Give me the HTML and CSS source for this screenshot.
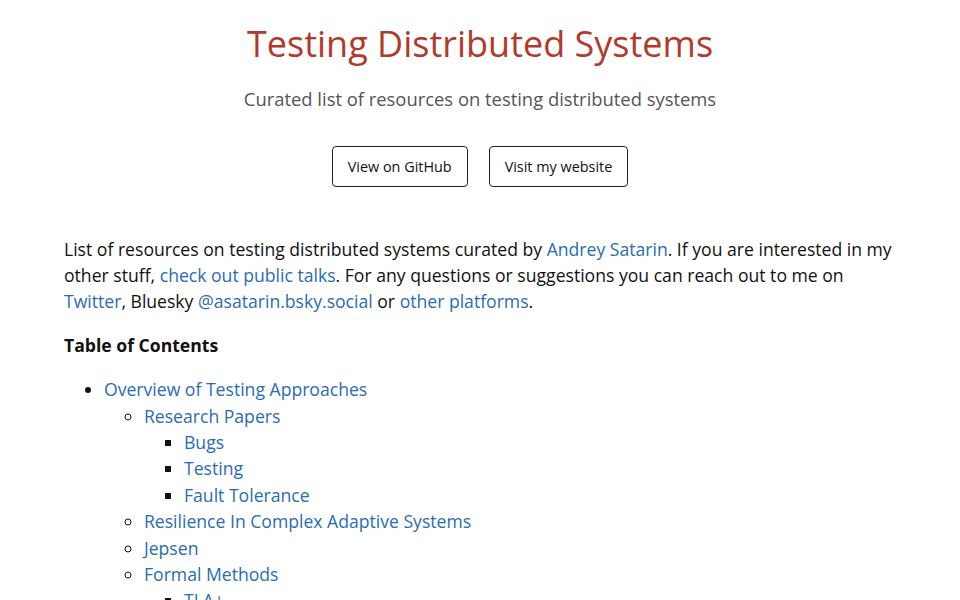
FILE: index.html
```html
<!DOCTYPE html>
<html lang="en">
<head>
<meta charset="utf-8">
<title>Testing Distributed Systems</title>
<link rel="stylesheet" href="styles.css">
</head>
<body>
<header class="hero">
  <h1 class="title">Testing Distributed Systems</h1>
  <p class="subtitle">Curated list of resources on testing distributed systems</p>
  <div class="actions">
    <a class="btn" href="#">View on GitHub</a>
    <a class="btn" href="#">Visit my website</a>
  </div>
</header>
<main class="content">
  <p class="intro">List of resources on testing distributed systems curated by <a href="#">Andrey Satarin</a>. If you are interested in my other stuff, <a href="#">check out public talks</a>. For any questions or suggestions you can reach out to me on <a href="#">Twitter</a>, Bluesky <a href="#">@asatarin.bsky.social</a> or <a href="#">other platforms</a>.</p>
  <p class="toc-title">Table of Contents</p>
  <ul class="toc">
    <li><a href="#">Overview of Testing Approaches</a>
      <ul>
        <li><a href="#">Research Papers</a>
          <ul>
            <li><a href="#">Bugs</a></li>
            <li><a href="#">Testing</a></li>
            <li><a href="#">Fault Tolerance</a></li>
          </ul>
        </li>
        <li><a href="#">Resilience In Complex Adaptive Systems</a></li>
        <li><a href="#">Jepsen</a></li>
        <li><a href="#">Formal Methods</a>
          <ul>
            <li><a href="#">TLA+</a></li>
          </ul>
        </li>
      </ul>
    </li>
  </ul>
</main>
</body>
</html>
```

FILE: styles.css
```css
* { box-sizing: border-box; }
body {
  margin: 0;
  font-family: "Open Sans", "Noto Sans", sans-serif;
  color: #111;
  background: #fff;
}
a { color: #2a6cb4; text-decoration: none; }
.hero {
  text-align: center;
  padding-top: 22px;
}
.title {
  margin: 0;
  font-size: 36px;
  font-weight: 400;
  line-height: 1.2;
  color: #b13a2c;
}
.subtitle {
  margin: 21px 0 0;
  font-size: 18.4px;
  line-height: 26px;
  color: #555;
}
.actions {
  display: flex;
  justify-content: center;
  gap: 21px;
  margin-top: 34px;
}
.btn {
  display: inline-block;
  padding: 10px 15px;
  border: 1px solid #222;
  border-radius: 4px;
  font-size: 14.4px;
  line-height: 19px;
  color: #111;
}
.content {
  padding: 0 64px;
  margin-top: 49px;
  font-size: 17.6px;
  line-height: 26px;
}
.intro { margin: 0; }
.toc-title {
  margin: 18px 0 0;
  font-weight: 700;
}
.toc {
  margin: 18px 0 0;
  padding-left: 40px;
}
.toc ul { margin: 0; padding-left: 40px; }
.toc li { line-height: 26.4px; }
```
